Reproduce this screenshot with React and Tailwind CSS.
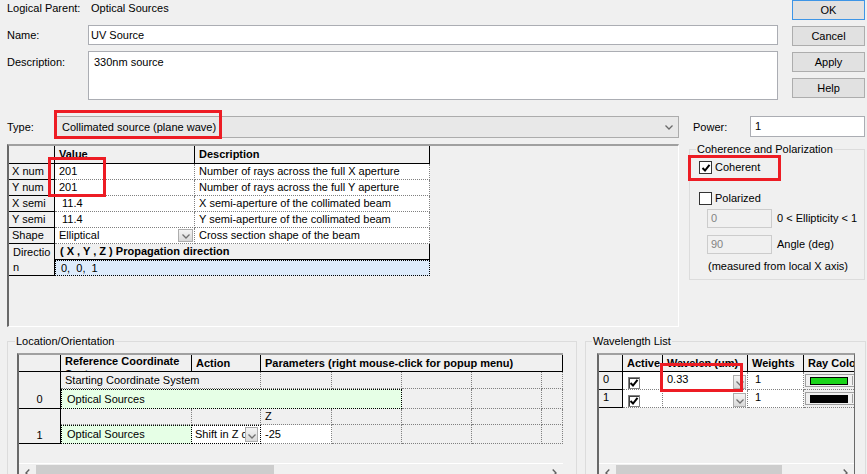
import React from "react";

function Chev({ dir = "down", color = "#606060" }) {
  if (dir === "down")
    return (
      <svg width="8" height="5" viewBox="0 0 8 5">
        <polyline points="0.5,0.5 4,4 7.5,0.5" fill="none" stroke={color} strokeWidth="1.3" />
      </svg>
    );
  if (dir === "left")
    return (
      <svg width="5" height="8" viewBox="0 0 5 8">
        <polyline points="4.3,0.5 1,4 4.3,7.5" fill="none" stroke={color} strokeWidth="1.4" />
      </svg>
    );
  return (
    <svg width="5" height="8" viewBox="0 0 5 8">
      <polyline points="0.7,0.5 4,4 0.7,7.5" fill="none" stroke={color} strokeWidth="1.4" />
    </svg>
  );
}

function DropBtn({ cls }) {
  return (
    <div className={cls + " shrink-0 border border-[#adadad] bg-linear-to-b from-[#f4f4f4] to-[#d9d9d9] flex items-end justify-center pb-[2px]"}>
      <Chev color="#707070" />
    </div>
  );
}

function Tick() {
  return (
    <svg width="10" height="10" viewBox="0 0 10 10">
      <polyline points="1.5,5 4,7.5 8.5,1.8" fill="none" stroke="#000" strokeWidth="2" />
    </svg>
  );
}

function WinCheck({ checked }) {
  return (
    <div className="w-[13px] h-[13px] shrink-0 border border-[#333333] bg-white flex items-center justify-center">
      {checked ? <Tick /> : null}
    </div>
  );
}

function GridCheck() {
  return (
    <div className="w-[12px] h-[12px] border border-[#808080] bg-white shadow-[inset_1px_1px_0_#404040] flex items-center justify-center">
      <Tick />
    </div>
  );
}

function HScroll({ thumb }) {
  return (
    <div className="h-[17px] shrink-0 bg-[#f0f0f0] border-t border-white flex items-start pt-[1px]">
      <div className="w-[17px] h-[15px] shrink-0 flex items-center justify-center">
        <Chev dir="left" />
      </div>
      <div className={thumb + " h-[13px] bg-[#cdcdcd] shrink-0"} />
      <div className="flex-1" />
      <div className="w-[17px] h-[15px] shrink-0 flex items-center justify-center">
        <Chev dir="right" />
      </div>
    </div>
  );
}

const RH = "bg-[#f0f0f0] border-r border-b border-black flex items-center pl-[3px] shrink-0";
const HDR = "bg-[#f0f0f0] border-r border-b border-black font-bold flex items-center pl-[4px] overflow-hidden whitespace-nowrap shrink-0";
const DC = "bg-white border-r border-b border-dotted border-[#808080] flex items-center pl-[4px] overflow-hidden whitespace-pre shrink-0";
const GC = "bg-[#f0f0f0] border-r border-b border-dotted border-[#808080] flex items-center overflow-hidden whitespace-nowrap shrink-0";
const BTN = "h-[20px] border bg-[#e1e1e1] flex items-center justify-center";

const topRows = [
  ["X num", "201", "Number of rays across the full X aperture"],
  ["Y num", "201", "Number of rays across the full Y aperture"],
  ["X semi", " 11.4", "X semi-aperture of the collimated beam"],
  ["Y semi", " 11.4", "Y semi-aperture of the collimated beam"],
];

export default function App() {
  return (
    <div className="relative w-[867px] h-[474px] overflow-hidden bg-[#f0f0f0] text-[11px] leading-[13px] text-black font-['Liberation_Sans',Arial,sans-serif] flex flex-col">
      {/* top area */}
      <div className="flex h-[116px] shrink-0">
        <div className="w-[778px] pl-[7px] flex flex-col">
          <div className="h-[25px] flex pt-[2px] shrink-0">
            <span className="w-[81px] shrink-0">Logical Parent:</span>
            <span className="pl-[3px]">Optical Sources</span>
          </div>
          <div className="flex h-[20px] shrink-0">
            <span className="w-[81px] shrink-0 flex items-center">Name:</span>
            <div className="flex-1 border border-[#abadb3] bg-white flex items-center pl-[2px]">UV Source</div>
          </div>
          <div className="flex h-[49px] mt-[6px] shrink-0">
            <span className="w-[81px] shrink-0 pt-[5px]">Description:</span>
            <div className="flex-1 border border-[#abadb3] bg-white pl-[5px] pt-[4px]">330nm source</div>
          </div>
        </div>
        <div className="ml-[14px] w-[73px] flex flex-col gap-[6px]">
          <div className={BTN + " border-[#3d95e6]"}>OK</div>
          <div className={BTN + " border-[#adadad]"}>Cancel</div>
          <div className={BTN + " border-[#adadad]"}>Apply</div>
          <div className={BTN + " border-[#adadad]"}>Help</div>
        </div>
      </div>

      {/* type row */}
      <div className="flex h-[22px] pl-[7px] shrink-0">
        <span className="w-[48px] shrink-0 flex items-center">Type:</span>
        <div className="w-[624px] h-[22px] shrink-0 border border-[#acacac] bg-[#e8e8e8] flex items-center justify-between pl-[6px] pr-[5px]">
          <span>Collimated source (plane wave)</span>
          <Chev color="#6a6a6a" />
        </div>
        <span className="ml-[14px] w-[57px] shrink-0 flex items-center">Power:</span>
        <div className="w-[115px] h-[21px] shrink-0 border border-[#abadb3] bg-white flex items-center pl-[4px]">1</div>
      </div>

      {/* middle */}
      <div className="flex h-[190px] shrink-0">
        <div className="ml-[7px] mt-[6px] w-[672px] h-[183px] shrink-0 border-t-2 border-l-2 border-r border-b border-t-[#a0a0a0] border-l-[#696969] border-r-white border-b-white flex flex-col">
          <div className="flex h-[18px] shrink-0">
            <div className={RH + " w-[46px]"} />
            <div className={HDR + " w-[140px]"}>Value</div>
            <div className={HDR + " w-[235px]"}>Description</div>
          </div>
          {topRows.map((r) => (
            <div key={r[0]} className="flex h-[16px] shrink-0">
              <div className={RH + " w-[46px]"}>{r[0]}</div>
              <div className={DC + " w-[140px]"}>{r[1]}</div>
              <div className={DC + " w-[235px]"}>{r[2]}</div>
            </div>
          ))}
          <div className="flex h-[16px] shrink-0">
            <div className={RH + " w-[46px]"}>Shape</div>
            <div className={DC + " w-[140px] justify-between pr-[1px]"}>
              <span>Elliptical</span>
              <DropBtn cls="w-[15px] h-[13px]" />
            </div>
            <div className={DC + " w-[235px]"}>Cross section shape of the beam</div>
          </div>
          <div className="flex h-[32px] shrink-0">
            <div className="w-[46px] shrink-0 bg-[#f0f0f0] border-r border-b border-black pl-[4px] pt-[1px] leading-[15px]">
              Directio
              <br />n
            </div>
            <div className="w-[375px] flex flex-col">
              <div className="h-[16px] shrink-0 bg-[#f0f0f0] border-r border-b border-black font-bold flex items-center pl-[5px] whitespace-pre">
                ( X , Y , Z ) Propagation direction
              </div>
              <div className="h-[16px] shrink-0 bg-[#ddebfb] border border-dotted border-black flex items-center pl-[5px] whitespace-pre">
                0,  0,  1
              </div>
            </div>
          </div>
        </div>

        <fieldset className="ml-[10px] mt-[4px] w-[176px] h-[138px] shrink-0 border border-[#dcdcdc]">
          <legend className="ml-[6px] px-[1px] leading-[14px]">Coherence and Polarization</legend>
          <div className="flex flex-col">
            <div className="flex items-center h-[13px] mt-[5px] ml-[9px]">
              <WinCheck checked />
              <span className="ml-[3px]">Coherent</span>
            </div>
            <div className="flex items-center h-[13px] mt-[18px] ml-[9px]">
              <WinCheck />
              <span className="ml-[3px]">Polarized</span>
            </div>
            <div className="flex items-center h-[19px] mt-[4px] ml-[17px]">
              <div className="w-[65px] h-[19px] border border-[#cccccc] bg-[#f0f0f0] flex items-center pl-[3px] text-[#838383]">0</div>
              <span className="ml-[5px] whitespace-nowrap">0 &lt; Ellipticity &lt; 1</span>
            </div>
            <div className="flex items-center h-[19px] mt-[7px] ml-[17px]">
              <div className="w-[65px] h-[19px] border border-[#cccccc] bg-[#f0f0f0] flex items-center pl-[3px] text-[#838383]">90</div>
              <span className="ml-[5px]">Angle (deg)</span>
            </div>
            <div className="mt-[5px] ml-[18px] leading-[14px] whitespace-nowrap">(measured from local X axis)</div>
          </div>
        </fieldset>
      </div>

      {/* bottom */}
      <div className="flex mt-[6px] shrink-0">
        <fieldset className="ml-[7px] w-[570px] h-[150px] shrink-0 border border-[#dcdcdc]">
          <legend className="ml-[7px] px-[1px] leading-[14px]">Location/Orientation</legend>
          <div className="ml-[9px] mt-[5px] w-[546px] h-[127px] border-l-2 border-t-2 border-l-[#696969] border-t-[#a0a0a0] flex flex-col">
            <div className="flex h-[17px] shrink-0">
              <div className={RH + " w-[42px]"} />
              <div className="w-[131px] shrink-0 bg-[#f0f0f0] border-r border-b border-black font-bold pl-[4px] overflow-hidden leading-[13px]">
                Reference Coordinate System
              </div>
              <div className={HDR + " w-[69px]"}>Action</div>
              <div className={HDR + " w-[302px]"}>Parameters (right mouse-click for popup menu)</div>
            </div>
            <div className="flex h-[37px] shrink-0">
              <div className="w-[42px] shrink-0 bg-[#f0f0f0] border-r border-b border-black flex items-end justify-center pb-[2px]">0</div>
              <div className="w-[502px] flex flex-col">
                <div className="flex h-[17px] shrink-0">
                  <div className={GC + " w-[200px] pl-[4px]"}>Starting Coordinate System</div>
                  <div className={GC + " w-[71px]"} />
                  <div className={GC + " w-[70px]"} />
                  <div className={GC + " w-[70px]"} />
                  <div className={GC + " w-[70px]"} />
                  <div className={GC + " w-[21px]"} />
                </div>
                <div className="flex h-[20px] shrink-0">
                  <div className="w-[341px] shrink-0 bg-[#e6ffe6] border border-dotted border-black pl-[5px] flex items-center">Optical Sources</div>
                  <div className={GC + " w-[70px]"} />
                  <div className={GC + " w-[70px]"} />
                  <div className={GC + " w-[21px]"} />
                </div>
              </div>
            </div>
            <div className="flex h-[35px] shrink-0">
              <div className="w-[42px] shrink-0 bg-[#f0f0f0] border-r border-b border-black flex items-end justify-center pb-[1px]">1</div>
              <div className="w-[502px] flex flex-col">
                <div className="flex h-[16px] shrink-0">
                  <div className={GC + " w-[131px]"} />
                  <div className={GC + " w-[69px]"} />
                  <div className={GC + " w-[71px] pl-[4px]"}>Z</div>
                  <div className={GC + " w-[70px]"} />
                  <div className={GC + " w-[70px]"} />
                  <div className={GC + " w-[70px]"} />
                  <div className={GC + " w-[21px]"} />
                </div>
                <div className="flex h-[19px] shrink-0">
                  <div className="w-[131px] shrink-0 bg-[#e6ffe6] border border-dotted border-black pl-[5px] flex items-center">Optical Sources</div>
                  <div className="w-[69px] shrink-0 bg-white border-t border-b border-r border-dotted border-black flex items-center pl-[3px] pr-[2px]">
                    <span className="flex-1 overflow-hidden whitespace-nowrap">Shift in Z direction</span>
                    <DropBtn cls="w-[13px] h-[15px]" />
                  </div>
                  <div className="w-[71px] shrink-0 bg-white border-r border-b border-dotted border-[#808080] pl-[4px] flex items-center">-25</div>
                  <div className={GC + " w-[70px]"} />
                  <div className={GC + " w-[70px]"} />
                  <div className={GC + " w-[70px]"} />
                  <div className={GC + " w-[21px]"} />
                </div>
              </div>
            </div>
            <div className="flex-1" />
            <HScroll thumb="w-[238px]" />
          </div>
        </fieldset>

        <fieldset className="ml-[8px] w-[281px] h-[150px] shrink-0 border border-[#dcdcdc]">
          <legend className="ml-[6px] px-[1px] leading-[14px]">Wavelength List</legend>
          <div className="ml-[11px] mt-[5px] w-[258px] h-[127px] border-l-2 border-t-2 border-r border-l-[#696969] border-t-[#a0a0a0] border-r-[#696969] flex flex-col overflow-hidden">
            <div className="flex h-[17px] shrink-0">
              <div className={RH + " w-[24px]"} />
              <div className={HDR + " w-[40px]"}>Active</div>
              <div className={HDR + " w-[85px]"}>Wavelen (um)</div>
              <div className={HDR + " w-[56px]"}>Weights</div>
              <div className="w-[50px] shrink-0 bg-[#f0f0f0] border-b border-black font-bold flex items-center pl-[4px] overflow-hidden whitespace-nowrap">Ray Color</div>
            </div>
            {[
              ["0", "0.33", "bg-[#19d419]"],
              ["1", "", "bg-black"],
            ].map((r) => (
              <div key={r[0]} className="flex h-[18px] shrink-0">
                <div className="w-[24px] shrink-0 bg-[#f0f0f0] border-r border-b border-black pl-[4px] pt-[1px]">{r[0]}</div>
                <div className="w-[40px] shrink-0 bg-white border-r border-b border-dotted border-[#808080] pl-[5px] pt-[5px]">
                  <GridCheck />
                </div>
                <div className="w-[85px] shrink-0 bg-white border-r border-b border-dotted border-[#808080] flex justify-between pl-[4px] pr-[1px]">
                  <span className="pt-[1px]">{r[1]}</span>
                  <div className="self-end">
                    <DropBtn cls="w-[13px] h-[14px]" />
                  </div>
                </div>
                <div className="w-[56px] shrink-0 bg-white border-r border-b border-dotted border-[#808080] pl-[4px] pt-[1px] whitespace-pre"> 1</div>
                <div className="w-[50px] shrink-0 bg-[#f0f0f0] border-b border-dotted border-[#808080] pl-[1px] pt-[2px] overflow-hidden">
                  <div className="w-[60px] h-[13px] border border-[#a0a0a0] bg-[#f0f0f0] flex items-center pl-[4px]">
                    <div className={r[2] + " w-[38px] h-[8px] border border-black shrink-0"} />
                    <div className="ml-[4px] w-px h-[9px] bg-[#a0a0a0] shrink-0" />
                  </div>
                </div>
              </div>
            ))}
            <div className="flex-1" />
            <HScroll thumb="w-[166px]" />
          </div>
        </fieldset>
      </div>

      {/* red annotation boxes */}
      <div className="absolute left-[54px] top-[110px] w-[168px] h-[29px] border-[3px] border-[#ed1c24] pointer-events-none" />
      <div className="absolute left-[48px] top-[157px] w-[58px] h-[40px] border-[3px] border-[#ed1c24] pointer-events-none" />
      <div className="absolute left-[688px] top-[155px] w-[93px] h-[26px] border-[3px] border-[#ed1c24] pointer-events-none" />
      <div className="absolute left-[660px] top-[363px] w-[83px] h-[29px] border-[3px] border-[#ed1c24] pointer-events-none" />
    </div>
  );
}
